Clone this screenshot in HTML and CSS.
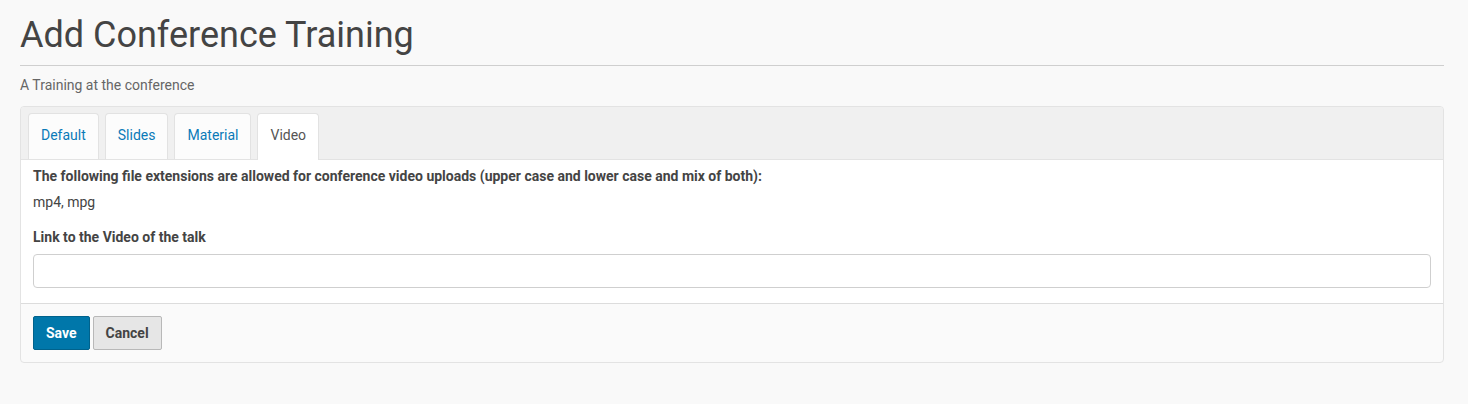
FILE: index.html
```html
<!DOCTYPE html>
<html lang="en">
<head>
<meta charset="utf-8">
<title>Add Conference Training</title>
<link rel="stylesheet" href="styles.css">
</head>
<body>
<div class="page">
  <h1 class="title">Add Conference Training</h1>
  <p class="subtitle">A Training at the conference</p>
  <form class="card">
    <div class="tabs">
      <a class="tab">Default</a>
      <a class="tab">Slides</a>
      <a class="tab">Material</a>
      <a class="tab active">Video</a>
    </div>
    <div class="card-body">
      <p class="note">The following file extensions are allowed for conference video uploads (upper case and lower case and mix of both):</p>
      <p class="exts">mp4, mpg</p>
      <label class="label" for="video">Link to the Video of the talk</label>
      <input class="input" id="video" type="text">
    </div>
    <div class="card-footer">
      <button type="button" class="btn btn-primary">Save</button>
      <button type="button" class="btn btn-default">Cancel</button>
    </div>
  </form>
</div>
</body>
</html>
```
FILE: styles.css
```css
* { box-sizing: border-box; }
html, body { margin: 0; padding: 0; }
body {
  background: #f9f9f9;
  font-family: Roboto, "Liberation Sans", sans-serif;
  color: #444;
  font-size: 14px;
}
.page {
  padding: 14px 24px 0 20px;
}
.title {
  margin: 0;
  font-size: 36px;
  font-weight: 400;
  line-height: 42px;
  color: #444;
  padding-bottom: 9px;
  border-bottom: 1px solid #cfcfcf;
}
.subtitle {
  margin: 9px 0 11px;
  font-size: 14px;
  line-height: 20px;
  color: #666;
}
.card {
  display: block;
  border: 1px solid #e3e3e3;
  border-radius: 4px;
  background: #fafafa;
  overflow: hidden;
}
.tabs {
  display: flex;
  gap: 6px;
  padding: 6px 7px 0;
  background: #f0f0f0;
  border-bottom: 1px solid #e3e3e3;
}
.tab {
  display: block;
  padding: 0 12px;
  height: 46px;
  line-height: 42px;
  font-size: 14px;
  color: #0a7ab8;
  background: #fcfcfc;
  border: 1px solid #e2e2e2;
  border-bottom: none;
  border-radius: 4px 4px 0 0;
  margin-bottom: -1px;
  cursor: pointer;
}
.tab.active {
  color: #555;
  background: #fff;
  height: 47px;
}
.card-body {
  background: #fff;
  padding: 6px 12px 15px;
  border-bottom: 1px solid #dcdcdc;
}
.note {
  margin: 0;
  font-weight: 700;
  line-height: 20px;
}
.exts {
  margin: 6px 0 0;
  line-height: 20px;
}
.label {
  display: block;
  margin-top: 15px;
  font-weight: 700;
  line-height: 20px;
}
.input {
  display: block;
  width: 100%;
  height: 34px;
  margin-top: 7px;
  border: 1px solid #cfcfcf;
  border-radius: 4px;
  background: #fff;
  font: inherit;
  padding: 0 8px;
}
.card-footer {
  display: flex;
  gap: 3px;
  padding: 12px 12px 12px;
}
.btn {
  height: 34px;
  padding: 0 12px;
  font-family: Roboto, "Liberation Sans", sans-serif;
  font-size: 14px;
  font-weight: 700;
  border-radius: 2px;
  cursor: pointer;
}
.btn-primary {
  background: #0077aa;
  border: 1px solid #00628c;
  color: #fff;
}
.btn-default {
  background: #e6e6e6;
  border: 1px solid #b8b8b8;
  color: #444;
}
```
